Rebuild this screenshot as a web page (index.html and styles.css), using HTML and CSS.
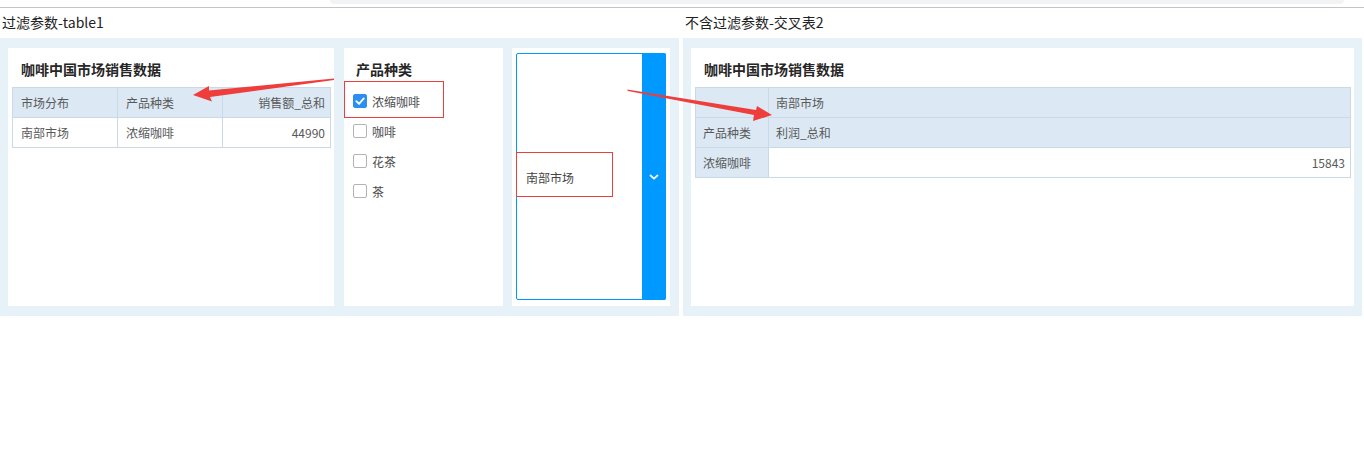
FILE: index.html
```html
<!DOCTYPE html>
<html lang="zh">
<head>
<meta charset="utf-8">
<title>过滤参数</title>
<link rel="stylesheet" href="styles.css">
</head>
<body>
<div class="chrome"><div class="chrome-tab"></div></div>
<div class="page">
  <section class="column">
    <div class="col-title">过滤参数-table1</div>
    <div class="panel panel-left">
      <div class="card card-table">
        <div class="card-title">咖啡中国市场销售数据</div>
        <table class="grid grid-left">
          <tr class="head"><td class="c1">市场分布</td><td class="c2">产品种类</td><td class="num">销售额_总和</td></tr>
          <tr><td>南部市场</td><td>浓缩咖啡</td><td class="num">44990</td></tr>
        </table>
      </div>
      <div class="card card-check">
        <div class="card-title">产品种类</div>
        <ul class="checks">
          <li><span class="box checked"><svg viewBox="0 0 14 14" width="14" height="14"><path d="M3.3 7.2 L6 9.8 L10.8 4.4" fill="none" stroke="#fff" stroke-width="1.8" stroke-linecap="round" stroke-linejoin="round"/></svg></span>浓缩咖啡</li>
          <li><span class="box"></span>咖啡</li>
          <li><span class="box"></span>花茶</li>
          <li><span class="box"></span>茶</li>
        </ul>
      </div>
      <div class="card card-select">
        <div class="select">
          <div class="select-value">南部市场</div>
          <div class="select-btn"><svg viewBox="0 0 10 6" width="10" height="6"><path d="M1 1 L5 4.6 L9 1" fill="none" stroke="#fff" stroke-width="1.7"/></svg></div>
        </div>
      </div>
    </div>
  </section>
  <section class="column">
    <div class="col-title">不含过滤参数-交叉表2</div>
    <div class="panel panel-right">
      <div class="card card-wide">
        <div class="card-title">咖啡中国市场销售数据</div>
        <table class="grid grid-right">
          <tr class="head"><td class="rc1"></td><td>南部市场</td></tr>
          <tr class="head"><td>产品种类</td><td>利润_总和</td></tr>
          <tr><td class="rowhead">浓缩咖啡</td><td class="num">15843</td></tr>
        </table>
      </div>
    </div>
  </section>
</div>
<svg class="annot" width="1364" height="461" viewBox="0 0 1364 461">
  <rect x="344.5" y="81.5" width="99" height="36" fill="none" stroke="#e8403c" stroke-width="1"/>
  <rect x="516.5" y="152.5" width="96" height="44" fill="none" stroke="#e8403c" stroke-width="1"/>
  <polygon points="334,78.6 334,80 210,97 212,101.5 193,95 209,86 209,90.5" fill="#ee3d3a"/>
  <polygon points="627,89.4 628,91 754,115 753,121 772,115 757,106 756,110" fill="#ee3d3a"/>
</svg>
</body>
</html>
```
FILE: styles.css
```css
* { box-sizing: border-box; }
html, body { margin: 0; padding: 0; background: #fff; }
body {
  width: 1364px;
  height: 461px;
  position: relative;
  overflow: hidden;
  font-family: "Noto Sans CJK SC", "Liberation Sans", sans-serif;
  color: #333;
}
.chrome {
  height: 8px;
  background: #fff;
  border-bottom: 1px solid #c4c4c4;
}
.chrome-tab {
  margin-left: 330px;
  margin-right: 20px;
  height: 4px;
  background: #f1f3f4;
  border-radius: 0 0 6px 6px;
}
.page {
  display: grid;
  grid-template-columns: 679px 679px;
  column-gap: 4px;
}
.col-title {
  height: 30px;
  line-height: 28px;
  padding-left: 2px;
  font-size: 14px;
  color: #222;
}
.panel {
  background: #e7f2f8;
  height: 278px;
  padding: 10px 8px;
  display: flex;
}
.panel-left { column-gap: 10px; }
.card {
  background: #fff;
  height: 258px;
  position: relative;
}
.card-table { width: 326px; padding: 0 3px 0 4px; }
.card-check { width: 159px; padding: 0 9px; }
.card-select { width: 158px; margin-left: -1px; padding: 5px 4px 6px 4px; }
.card-wide { width: 663px; padding: 0 3px 0 4px; }
.card-title {
  height: 39px;
  padding-top: 11px;
  line-height: 20px;
  font-size: 14px;
  font-weight: bold;
  color: #262626;
  padding-left: 9px;
}
.card-check .card-title { padding-left: 3px; height: 38px; }
.grid {
  border-collapse: collapse;
  width: 100%;
  font-size: 12px;
  color: #595959;
}
.grid td {
  height: 30px;
  border: 1px solid #c9d9e5;
  padding: 0 5px 0 8px;
  white-space: nowrap;
}
.grid .head td { background: #dce9f4; }
.grid td.num { text-align: right; }
.grid-left { width: 319px; }
.grid-left .c1 { width: 105px; }
.grid-left .c2 { width: 105px; }
.grid-right { width: 656px; }
.grid-right .rc1 { width: 73px; }
.grid-right td { padding-left: 7px; }
.grid-right td.rowhead { background: #dce9f4; }
.checks {
  list-style: none;
  margin: 0;
  padding: 0;
}
.checks li {
  height: 30px;
  display: flex;
  align-items: center;
  font-size: 12px;
  color: #4d4d4d;
}
.box {
  width: 14px;
  height: 14px;
  border: 1px solid #b4b4b4;
  border-radius: 2px;
  margin-right: 5px;
  display: inline-flex;
  background: #fff;
}
.box.checked {
  background: #2b8ff0;
  border-color: #2b8ff0;
}
.box.checked svg { margin: -1px; }
.select {
  height: 247px;
  border: 1px solid #0099ff;
  border-radius: 2px;
  display: flex;
}
.select-value {
  flex: 1;
  display: flex;
  align-items: center;
  padding-left: 9px;
  padding-top: 1px;
  font-size: 12px;
  color: #444;
}
.select-btn {
  width: 24px;
  background: #0099ff;
  display: flex;
  align-items: center;
  justify-content: center;
  margin: -1px -1px -1px 0;
  border-radius: 0 2px 2px 0;
}
.annot {
  position: absolute;
  left: 0;
  top: 0;
  pointer-events: none;
}
```
